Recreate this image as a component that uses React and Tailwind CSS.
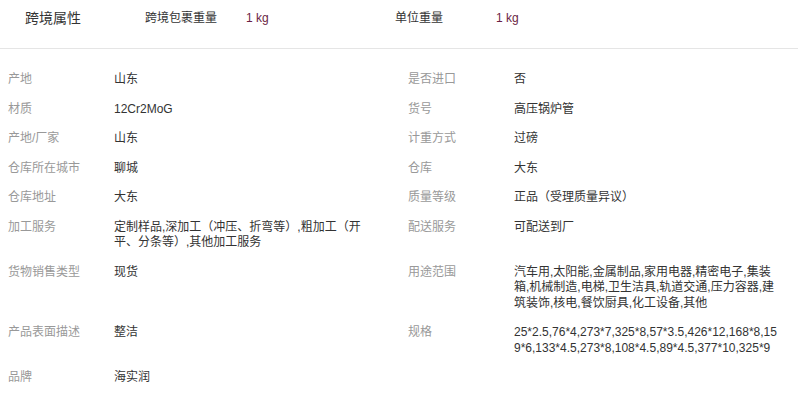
import React from "react";

const rows = [
  ["产地", "山东", "是否进口", "否"],
  ["材质", "12Cr2MoG", "货号", "高压锅炉管"],
  ["产地/厂家", "山东", "计重方式", "过磅"],
  ["仓库所在城市", "聊城", "仓库", "大东"],
  ["仓库地址", "大东", "质量等级", "正品（受理质量异议）"],
  ["加工服务", "定制样品,深加工（冲压、折弯等）,粗加工（开平、分条等）,其他加工服务", "配送服务", "可配送到厂"],
  ["货物销售类型", "现货", "用途范围", "汽车用,太阳能,金属制品,家用电器,精密电子,集装箱,机械制造,电梯,卫生洁具,轨道交通,压力容器,建筑装饰,核电,餐饮厨具,化工设备,其他"],
  ["产品表面描述", "整洁", "规格", "25*2.5,76*4,273*7,325*8,57*3.5,426*12,168*8,159*6,133*4.5,273*8,108*4.5,89*4.5,377*10,325*9"],
  ["品牌", "海实润", "", ""],
];

export default function App() {
  return (
    <div
      className="w-[798px] h-[399px] bg-white overflow-hidden text-[12px] text-[#333]"
      style={{ fontFamily: '"Liberation Sans", "Noto Sans CJK SC", sans-serif' }}
    >
      <div className="h-[48px] flex items-start pt-[8px] pl-[25px] leading-[20px]">
        <div className="w-[120px] text-[14px] text-[#333]">跨境属性</div>
        <div className="w-[101px] text-[#333]">跨境包裹重量</div>
        <div className="w-[149px] text-[#6b1f45]">1 kg</div>
        <div className="w-[101px] text-[#333]">单位重量</div>
        <div className="text-[#6b1f45]">1 kg</div>
      </div>
      <div className="h-px bg-[#e5e5e5]" />
      <div className="pt-[16px] pl-[8px] grid grid-cols-[106px_294px_106px_1fr] leading-[15.5px]">
        {rows.map((r, i) => (
          <React.Fragment key={i}>
            <div className="py-[7px] text-[#999]">{r[0]}</div>
            <div className="py-[7px]">
              <div className="w-[252px] break-all">{r[1]}</div>
            </div>
            <div className="py-[7px] text-[#999]">{r[2]}</div>
            <div className="py-[7px]">
              <div className="w-[265px] break-all">{r[3]}</div>
            </div>
          </React.Fragment>
        ))}
      </div>
    </div>
  );
}
